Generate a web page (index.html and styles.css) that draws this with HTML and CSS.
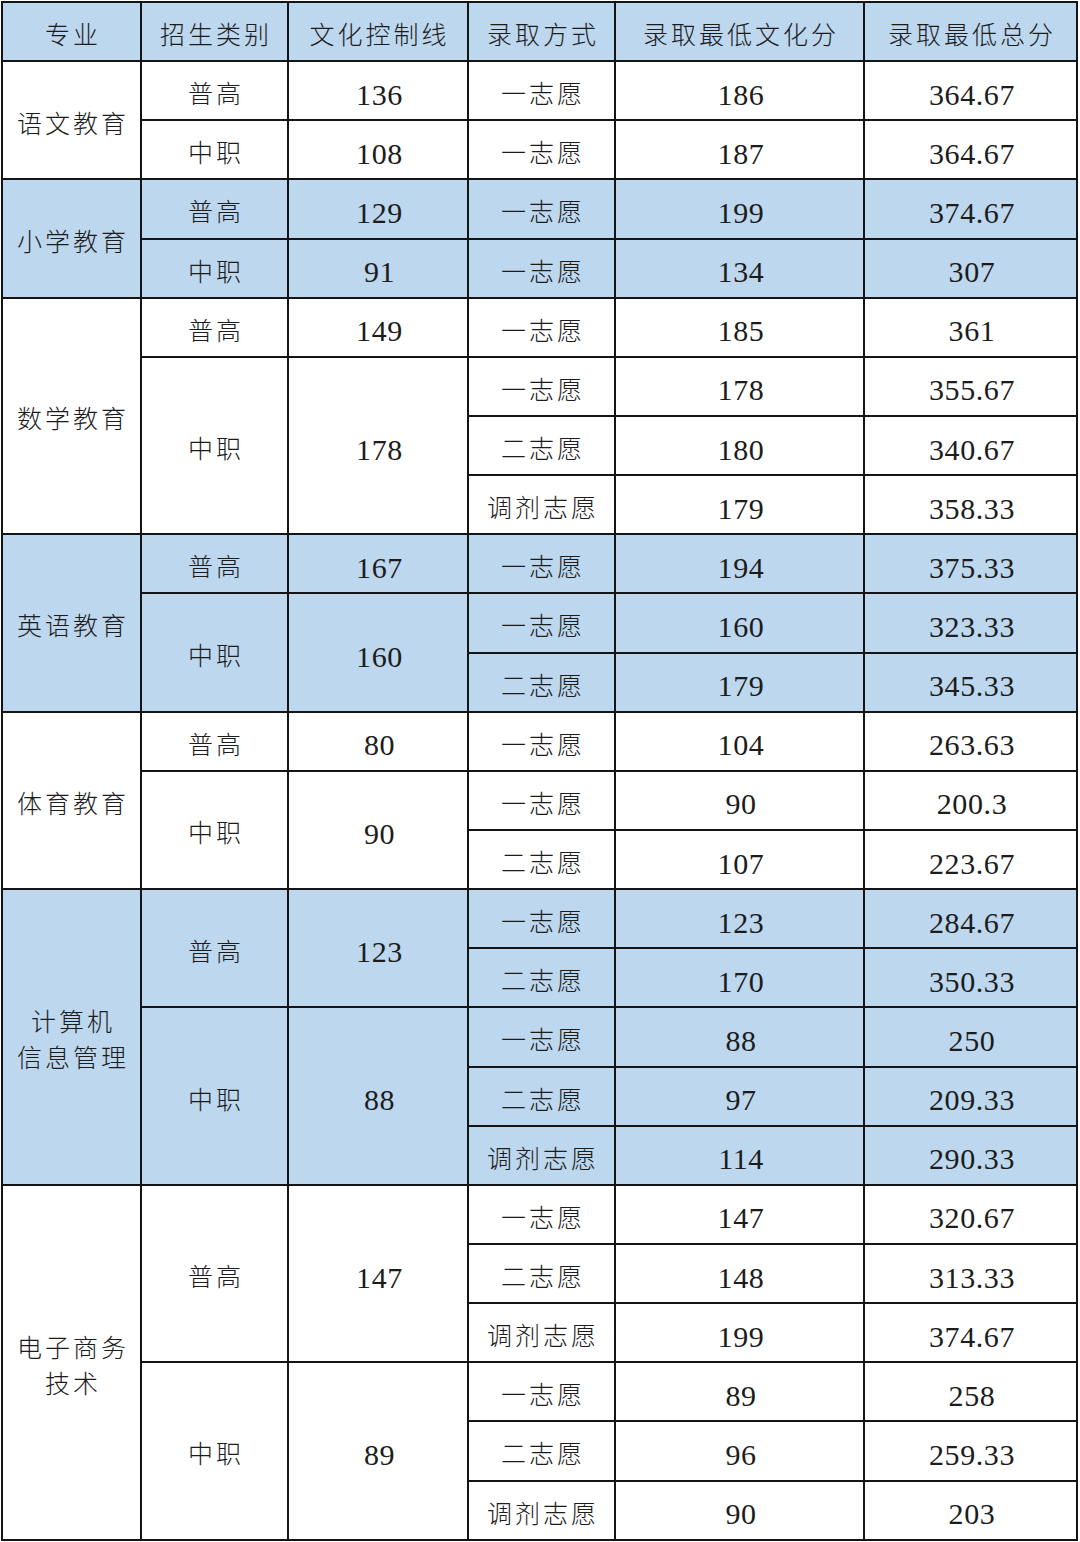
FILE: index.html
```html
<!DOCTYPE html>
<html lang="zh-CN">
<head>
<meta charset="utf-8">
<title>录取分数</title>
<link rel="stylesheet" href="styles.css">
</head>
<body>
<table class="score-table">
  <colgroup>
    <col class="c1"><col class="c2"><col class="c3"><col class="c4"><col class="c5"><col class="c6">
  </colgroup>
  <thead>
    <tr class="blue">
      <th>专业</th><th>招生类别</th><th>文化控制线</th><th>录取方式</th><th>录取最低文化分</th><th>录取最低总分</th>
    </tr>
  </thead>
  <tbody>
    <tr><td rowspan="2" class="major">语文教育</td><td>普高</td><td class="num">136</td><td>一志愿</td><td class="num">186</td><td class="num">364.67</td></tr>
    <tr><td>中职</td><td class="num">108</td><td>一志愿</td><td class="num">187</td><td class="num">364.67</td></tr>

    <tr class="blue"><td rowspan="2" class="major">小学教育</td><td>普高</td><td class="num">129</td><td>一志愿</td><td class="num">199</td><td class="num">374.67</td></tr>
    <tr class="blue"><td>中职</td><td class="num">91</td><td>一志愿</td><td class="num">134</td><td class="num">307</td></tr>

    <tr><td rowspan="4" class="major">数学教育</td><td>普高</td><td class="num">149</td><td>一志愿</td><td class="num">185</td><td class="num">361</td></tr>
    <tr><td rowspan="3">中职</td><td rowspan="3" class="num">178</td><td>一志愿</td><td class="num">178</td><td class="num">355.67</td></tr>
    <tr><td>二志愿</td><td class="num">180</td><td class="num">340.67</td></tr>
    <tr><td>调剂志愿</td><td class="num">179</td><td class="num">358.33</td></tr>

    <tr class="blue"><td rowspan="3" class="major">英语教育</td><td>普高</td><td class="num">167</td><td>一志愿</td><td class="num">194</td><td class="num">375.33</td></tr>
    <tr class="blue"><td rowspan="2">中职</td><td rowspan="2" class="num">160</td><td>一志愿</td><td class="num">160</td><td class="num">323.33</td></tr>
    <tr class="blue"><td>二志愿</td><td class="num">179</td><td class="num">345.33</td></tr>

    <tr><td rowspan="3" class="major">体育教育</td><td>普高</td><td class="num">80</td><td>一志愿</td><td class="num">104</td><td class="num">263.63</td></tr>
    <tr><td rowspan="2">中职</td><td rowspan="2" class="num">90</td><td>一志愿</td><td class="num">90</td><td class="num">200.3</td></tr>
    <tr><td>二志愿</td><td class="num">107</td><td class="num">223.67</td></tr>

    <tr class="blue"><td rowspan="5" class="major">计算机<br>信息管理</td><td rowspan="2">普高</td><td rowspan="2" class="num">123</td><td>一志愿</td><td class="num">123</td><td class="num">284.67</td></tr>
    <tr class="blue"><td>二志愿</td><td class="num">170</td><td class="num">350.33</td></tr>
    <tr class="blue"><td rowspan="3">中职</td><td rowspan="3" class="num">88</td><td>一志愿</td><td class="num">88</td><td class="num">250</td></tr>
    <tr class="blue"><td>二志愿</td><td class="num">97</td><td class="num">209.33</td></tr>
    <tr class="blue"><td>调剂志愿</td><td class="num">114</td><td class="num">290.33</td></tr>

    <tr><td rowspan="6" class="major">电子商务<br>技术</td><td rowspan="3">普高</td><td rowspan="3" class="num">147</td><td>一志愿</td><td class="num">147</td><td class="num">320.67</td></tr>
    <tr><td>二志愿</td><td class="num">148</td><td class="num">313.33</td></tr>
    <tr><td>调剂志愿</td><td class="num">199</td><td class="num">374.67</td></tr>
    <tr><td rowspan="3">中职</td><td rowspan="3" class="num">89</td><td>一志愿</td><td class="num">89</td><td class="num">258</td></tr>
    <tr><td>二志愿</td><td class="num">96</td><td class="num">259.33</td></tr>
    <tr><td>调剂志愿</td><td class="num">90</td><td class="num">203</td></tr>
  </tbody>
</table>
</body>
</html>
```

FILE: styles.css
```css
html, body {
  margin: 0;
  padding: 0;
  background: #ffffff;
}

body {
  padding: 1px 0 0 1px;
}

.score-table {
  border-collapse: collapse;
  table-layout: fixed;
  width: 1077px;
  color: #1c1c1c;
  font-family: "Noto Sans CJK SC", "Noto Sans CJK JP", sans-serif;
  font-weight: 300;
}

.c1 { width: 139px; }
.c2 { width: 147px; }
.c3 { width: 180px; }
.c4 { width: 147px; }
.c5 { width: 249px; }
.c6 { width: 213px; }

.score-table th,
.score-table td {
  border: 2px solid #141414;
  text-align: center;
  vertical-align: middle;
  padding: 3px 0 0 3px;
  font-size: 25px;
  font-weight: 300;
  letter-spacing: 3px;
  line-height: 36px;
  white-space: nowrap;
}

.score-table tr {
  height: 59.15px;
}

.score-table .num {
  font-family: "Liberation Serif", "Times New Roman", serif;
  font-size: 30px;
  font-weight: 400;
  letter-spacing: 0.6px;
  padding-top: 8px;
}

.blue {
  background: #bdd7ee;
}

.blue td,
.blue th {
  background: #bdd7ee;
}
```
